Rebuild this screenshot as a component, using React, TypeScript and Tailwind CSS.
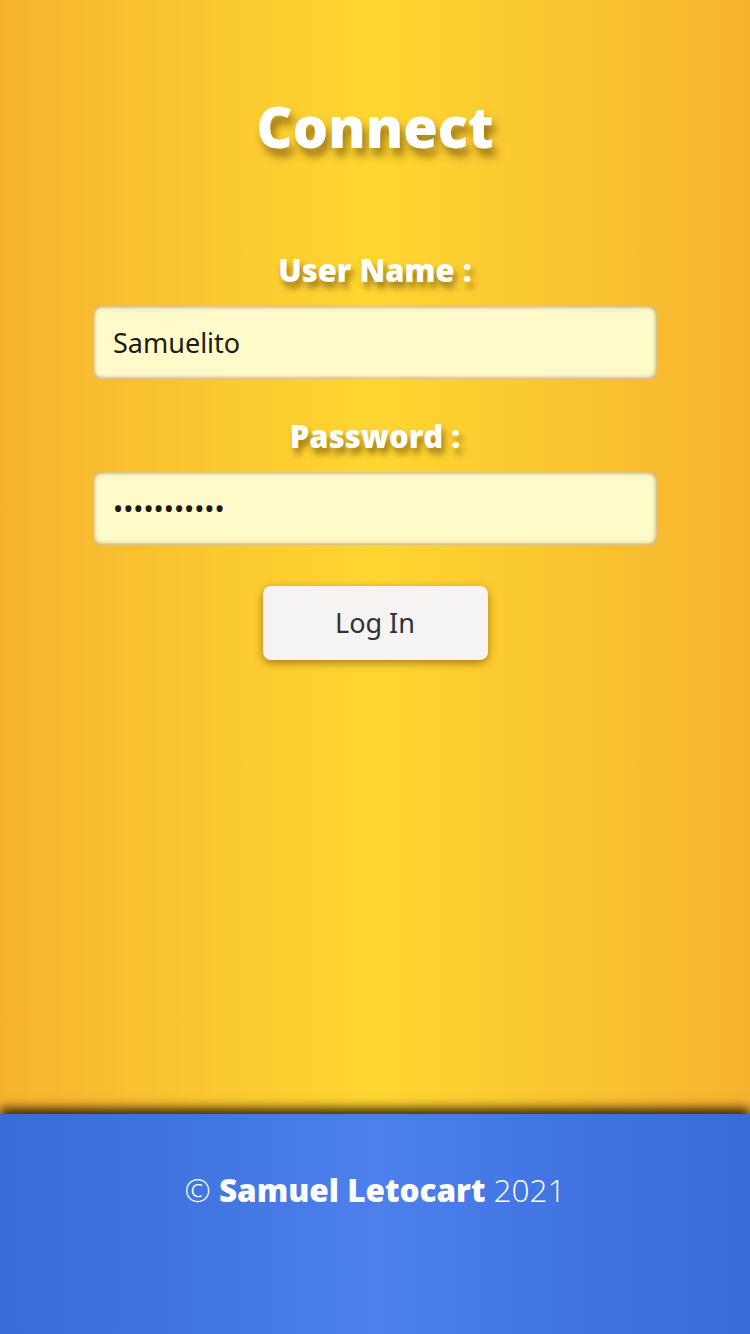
import React from 'react';

const headFont = "font-['Open_Sans','Noto_Sans',sans-serif]";
const bodyFont = "font-['Noto_Sans','Open_Sans',sans-serif]";

const Field = ({ label, value, type }: { label: string; value: string; type: string }) => (
  <div className="flex flex-col items-center w-[564px]">
    <label
      className={`${headFont} text-white font-extrabold text-[31px] leading-[40px] [text-shadow:3px_6px_6px_rgba(80,50,0,0.55)]`}
    >
      {label}
    </label>
    <input
      type={type}
      defaultValue={value}
      readOnly
      className={`${bodyFont} mt-4 w-full h-[73px] rounded-lg bg-[#fffac9] px-5 text-[27px] text-[#1c1a14] outline-none shadow-[inset_0_0_5px_rgba(110,70,0,0.7)]`}
    />
  </div>
);

const App = () => {
  return (
    <div className="w-[750px] min-h-[1334px] flex flex-col">
      <main className="h-[1114px] bg-[linear-gradient(to_right,#f6b32f_0%,#fbc930_30%,#ffd630_50%,#fbc930_70%,#f6b32f_100%)] flex flex-col items-center pt-[96px]">
        <h1
          className={`${headFont} text-white font-extrabold text-[56px] leading-[60px] [text-shadow:4px_8px_8px_rgba(80,50,0,0.55)]`}
        >
          Connect
        </h1>
        <div className="mt-[94px]">
          <Field label="User Name :" value="Samuelito" type="text" />
        </div>
        <div className="mt-[37px]">
          <Field label="Password :" value="Samuelito1!" type="password" />
        </div>
        <button
          className={`${bodyFont} mt-[41px] w-[225px] h-[74px] rounded-lg bg-[#f5f4f2] text-[27px] text-[#2f3235] shadow-[0_3px_8px_rgba(110,70,0,0.6)]`}
        >
          Log In
        </button>
      </main>
      <footer className="relative z-10 h-[220px] bg-[linear-gradient(to_right,#3a6ad5_0%,#4479e6_35%,#4d80ed_50%,#4479e6_65%,#3a6ad5_100%)] shadow-[0_-6px_10px_rgba(30,15,0,0.85)] flex justify-center pt-[56px]">
        <p className={`${headFont} text-white text-[31.5px] leading-[40px] font-light`}>
          © <span className="font-extrabold">Samuel Letocart</span> 2021
        </p>
      </footer>
    </div>
  );
};

export default App;
